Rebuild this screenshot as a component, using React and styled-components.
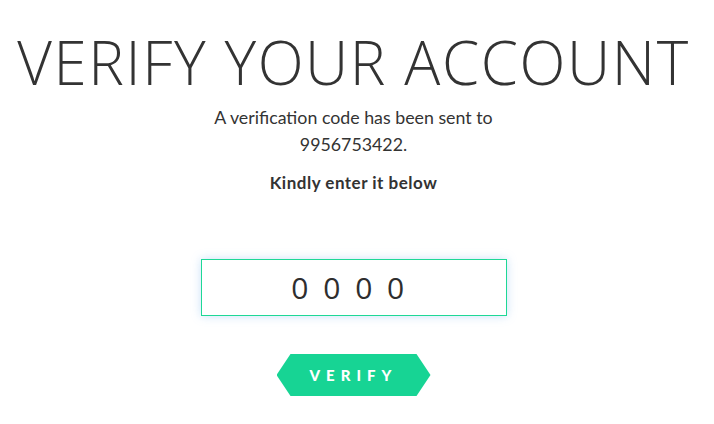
import React from 'react';
import styled, { createGlobalStyle } from 'styled-components';

const GlobalStyle = createGlobalStyle`
  body {
    margin: 0;
    background: #fff;
    font-family: "Lato", "Open Sans", sans-serif;
    color: #333;
  }
`;

const Page = styled.div`
  display: flex;
  flex-direction: column;
  align-items: center;
  width: 707px;
  padding-top: 28px;
`;

const Title = styled.h1`
  margin: 0;
  font-family: "Open Sans", sans-serif;
  font-weight: 300;
  font-size: 60px;
  line-height: 68px;
  color: #333;
  letter-spacing: 1.6px;
  white-space: nowrap;
`;

const Message = styled.p`
  margin: 8px 0 0;
  width: 300px;
  text-align: center;
  font-family: "Lato", sans-serif;
  font-size: 17.8px;
  line-height: 27px;
  color: #333;
`;

const Hint = styled.p`
  margin: 14px 0 0;
  font-family: "Lato", sans-serif;
  font-weight: 700;
  font-size: 17px;
  letter-spacing: 0.5px;
  color: #333;
`;

const CodeInput = styled.input`
  margin-top: 66px;
  width: 306px;
  height: 57px;
  box-sizing: border-box;
  border: 1px solid #1ed896;
  box-shadow: 0 0 9px rgba(120, 180, 240, 0.4);
  outline: none;
  padding: 0 8px 0 0;
  text-align: center;
  font-family: "Open Sans", sans-serif;
  font-size: 30px;
  color: #2e2e2e;
  letter-spacing: 3.5px;
`;

const VerifyButton = styled.button`
  margin-top: 38px;
  width: 154px;
  height: 42px;
  border: none;
  background: #17d494;
  clip-path: polygon(14px 0, 140px 0, 154px 50%, 140px 100%, 14px 100%, 0 50%);
  color: #fff;
  font-family: "Lato", sans-serif;
  font-weight: 900;
  font-size: 15px;
  letter-spacing: 6px;
  padding-left: 6px;
  cursor: pointer;
`;

export default function App() {
  return (
    <>
      <GlobalStyle />
      <Page>
        <Title>VERIFY YOUR ACCOUNT</Title>
        <Message>A verification code has been sent to 9956753422.</Message>
        <Hint>Kindly enter it below</Hint>
        <CodeInput defaultValue="0 0 0 0" />
        <VerifyButton>VERIFY</VerifyButton>
      </Page>
    </>
  );
}
